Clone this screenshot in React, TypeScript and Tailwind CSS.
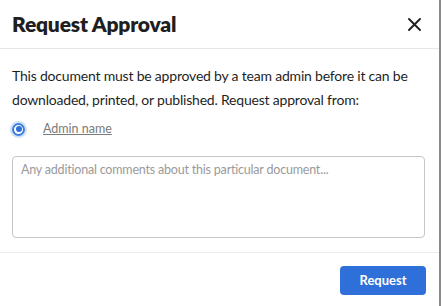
export default function App() {
  return (
    <div
      className="w-[441px] h-[306px] bg-white border-r-2 border-[#8a8a8a] flex flex-col text-[#222] overflow-hidden"
      style={{ fontFamily: "Lato, 'Open Sans', sans-serif" }}
    >
      <div className="shrink-0 h-[49px] pl-3 pr-[18px] flex items-center justify-between border-b border-[#e6e6e6]">
        <h1 className="text-[21px] font-extrabold tracking-[-0.2px] text-[#1f1f1f]">Request Approval</h1>
        <button className="w-[14px] h-[14px] flex items-center justify-center">
          <svg width="13" height="13" viewBox="0 0 13 13" fill="none">
            <path d="M1 1L12 12M12 1L1 12" stroke="#222" strokeWidth="1.9" strokeLinecap="round" />
          </svg>
        </button>
      </div>

      <div className="shrink-0 px-3 pt-[15px]">
        <p className="text-[14px] leading-[24px] tracking-[-0.2px] text-[#1f1f1f]">
          This document must be approved by a team admin before it can be downloaded, printed, or published. Request approval from:
        </p>

        <label className="mt-[7px] h-[20px] flex items-center gap-[18px]">
          <span className="w-[13px] h-[13px] rounded-full border-2 border-[#3b7ddd] ring-2 ring-[#cfe0f8] flex items-center justify-center">
            <span className="w-[6px] h-[6px] rounded-full bg-[#2f6fd9]" />
          </span>
          <span className="text-[12.5px] text-[#7a7a7a] underline">Admin name</span>
        </label>

        <textarea
          className="block mt-[17px] w-[413px] h-[82px] border border-[#c6c6c6] rounded-[4px] px-2 py-[4px] text-[12.5px] tracking-[-0.2px] resize-none placeholder:text-[#9a9a9a] outline-none"
          placeholder="Any additional comments about this particular document..."
        />
      </div>

      <div className="shrink-0 mt-[14px] border-t border-[#ececec] flex justify-end pr-[13px] pt-[13px]">
        <button className="w-[86px] h-[29px] rounded-[4px] bg-[#2f6fd9] text-white text-[13px] font-bold">
          Request
        </button>
      </div>
    </div>
  );
}
